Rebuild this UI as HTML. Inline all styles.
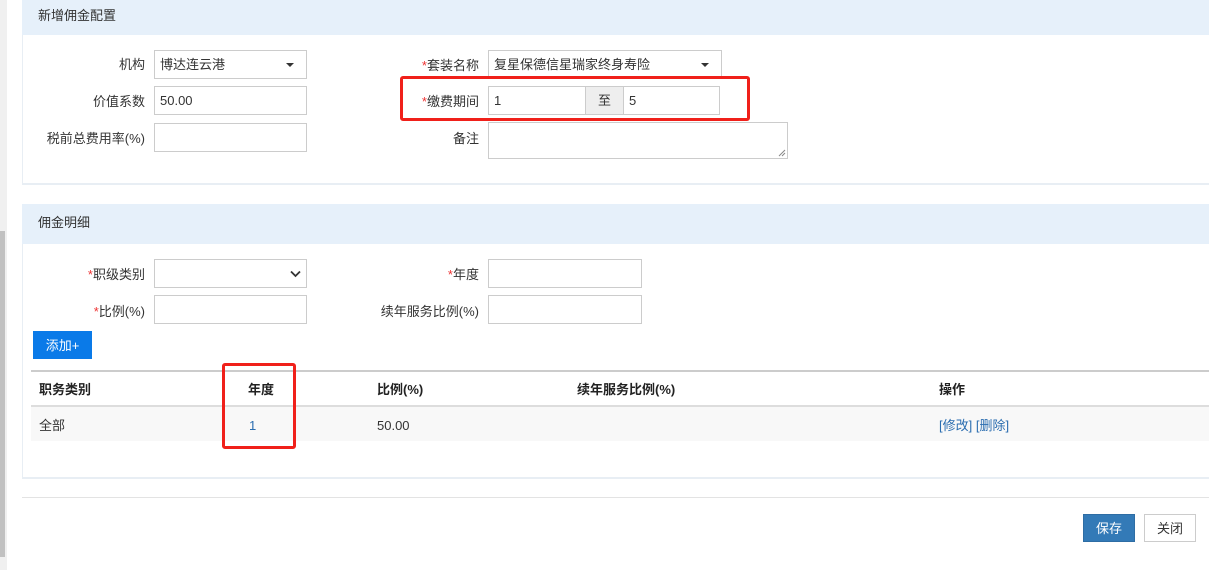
<!DOCTYPE html>
<html><head><meta charset="utf-8"><style>
*{box-sizing:border-box;margin:0;padding:0}
body{width:1209px;height:570px;overflow:hidden;background:#fff;font-family:"Liberation Sans","Noto Sans CJK SC",sans-serif;font-size:13px;color:#333;position:relative}
.a{position:absolute}
.lbl{position:absolute;text-align:right;font-size:13px;line-height:32px;color:#333}
.inp{position:absolute;border:1px solid #ccc;background:#fff;height:29px;line-height:28px;padding-left:5px;font-size:13px;color:#333}
.st{color:#e33}
.hd{position:absolute;left:22px;right:0;background:#e6f0fa;padding-left:16px;font-size:13px;color:#333}
</style></head><body>
<div class="a" style="left:0;top:0;width:7px;height:570px;background:#f0f0f0"></div>
<div class="a" style="left:0;top:231px;width:5px;height:326px;background:#c1c1c1"></div>

<div class="a" style="left:22px;top:0;right:0;height:185px;border-left:1px solid #e8eef4;border-bottom:2px solid #e8eef4"></div>
<div class="hd" style="top:0;height:35px;line-height:32px">新增佣金配置</div>
<div class="lbl" style="left:40px;width:105px;top:49px">机构</div>
<div class="inp" style="left:154px;top:50px;width:153px">博达连云港<span class="a" style="right:12px;top:12px;border:4px solid transparent;border-top:4px solid #333;border-bottom:0;width:0;height:0"></span></div>
<div class="lbl" style="left:40px;width:105px;top:86px">价值系数</div>
<div class="inp" style="left:154px;top:86px;width:153px">50.00</div>
<div class="lbl" style="left:30px;width:115px;top:123px">税前总费用率(%)</div>
<div class="inp" style="left:154px;top:123px;width:153px"></div>

<div class="lbl" style="left:380px;width:99px;top:50px"><span class="st">*</span>套装名称</div>
<div class="inp" style="left:488px;top:50px;width:234px">复星保德信星瑞家终身寿险<span class="a" style="right:12px;top:12px;border:4px solid transparent;border-top:4px solid #333;border-bottom:0;width:0;height:0"></span></div>
<div class="lbl" style="left:380px;width:99px;top:86px"><span class="st">*</span>缴费期间</div>
<div class="inp" style="left:488px;top:86px;width:98px">1</div>
<div class="inp" style="left:585px;top:86px;width:39px;background:#eee;text-align:center;padding:0">至</div>
<div class="inp" style="left:623px;top:86px;width:97px">5</div>
<div class="a" style="left:400px;top:76px;width:350px;height:45px;border:3px solid #f0201a;border-radius:3px"></div>
<div class="lbl" style="left:380px;width:99px;top:123px">备注</div>
<div class="inp" style="left:488px;top:122px;width:300px;height:37px"><svg class="a" style="right:1px;bottom:1px" width="8" height="8" viewBox="0 0 8 8"><path d="M7 1L1 7M7 4L4 7" stroke="#888" stroke-width="1"/></svg></div>

<div class="a" style="left:22px;top:204px;right:0;height:275px;border-left:1px solid #e8eef4;border-bottom:2px solid #e8eef4"></div>
<div class="hd" style="top:204px;height:40px;line-height:38px">佣金明细</div>
<div class="lbl" style="left:40px;width:105px;top:259px"><span class="st">*</span>职级类别</div>
<div class="inp" style="left:154px;top:259px;width:153px"><svg class="a" style="right:5px;top:10px" width="11" height="8" viewBox="0 0 11 8"><path d="M1 1.5L5.5 6L10 1.5" stroke="#333" stroke-width="1.8" fill="none"/></svg></div>
<div class="lbl" style="left:40px;width:105px;top:296px"><span class="st">*</span>比例(%)</div>
<div class="inp" style="left:154px;top:295px;width:153px"></div>
<div class="lbl" style="left:360px;width:119px;top:259px"><span class="st">*</span>年度</div>
<div class="inp" style="left:488px;top:259px;width:154px"></div>
<div class="lbl" style="left:340px;width:139px;top:296px">续年服务比例(%)</div>
<div class="inp" style="left:488px;top:295px;width:154px"></div>
<div class="a" style="left:33px;top:331px;width:59px;height:28px;background:#0a7ae8;color:#fff;text-align:center;line-height:30px">添加+</div>

<div class="a" style="left:31px;top:370px;right:0;height:2px;background:#ccc"></div>
<div class="a" style="left:31px;top:372px;right:0;height:34px;line-height:36px;font-weight:bold;color:#222">
<span class="a" style="left:8px">职务类别</span><span class="a" style="left:217px">年度</span><span class="a" style="left:346px">比例(%)</span><span class="a" style="left:546px">续年服务比例(%)</span><span class="a" style="left:908px">操作</span></div>
<div class="a" style="left:31px;top:405px;right:0;height:2px;background:#ddd"></div>
<div class="a" style="left:31px;top:407px;right:0;height:34px;line-height:37px;background:#f8f8f8">
<span class="a" style="left:8px">全部</span><span class="a" style="left:218px;color:#2a6db0">1</span><span class="a" style="left:346px">50.00</span><span class="a" style="left:908px;color:#2a6db0">[修改] [删除]</span></div>
<div class="a" style="left:222px;top:363px;width:74px;height:86px;border:3px solid #f0201a;border-radius:3px"></div>

<div class="a" style="left:22px;top:497px;right:0;height:1px;background:#e3e3e3"></div>
<div class="a" style="left:1083px;top:514px;width:52px;height:28px;background:#337ab7;border:1px solid #2e6da4;color:#fff;text-align:center;line-height:27px">保存</div>
<div class="a" style="left:1144px;top:514px;width:52px;height:28px;background:#fff;border:1px solid #ccc;color:#333;text-align:center;line-height:27px">关闭</div>
</body></html>
